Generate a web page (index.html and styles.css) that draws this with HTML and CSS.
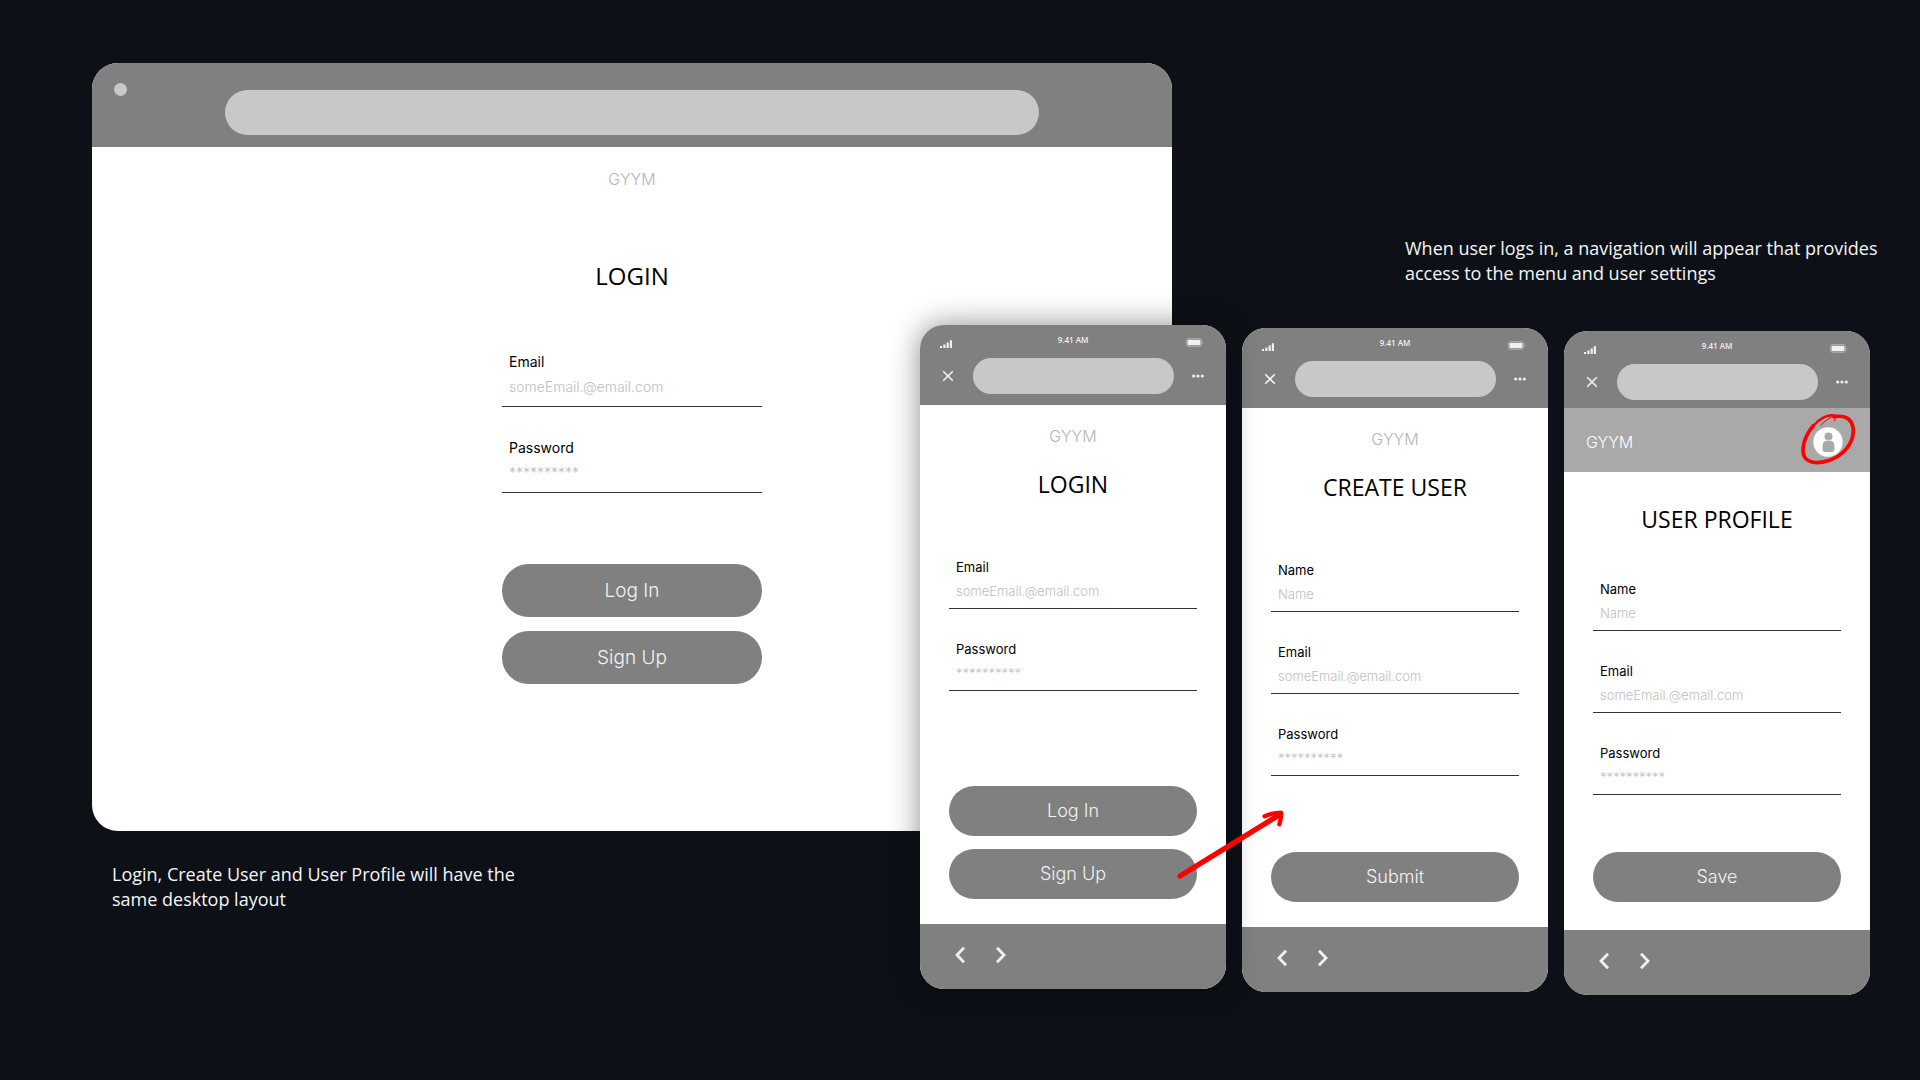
FILE: index.html
```html
<!DOCTYPE html>
<html lang="en">
<head>
<meta charset="utf-8">
<meta name="viewport" content="width=device-width, initial-scale=1">
<title>GYYM wireframes</title>
<link rel="stylesheet" href="styles.css">
</head>
<body>
<svg class="sprite" aria-hidden="true">
  <symbol id="signal" viewBox="0 0 12 8"><path d="M0 6h2v2H0zM3.3 4.5h2.200V8H3.300zM6.600 2.500h2.200V8H6.600zM9.800 .3H12V8H9.800z"/></symbol>
  <symbol id="battery" viewBox="0 0 18 9"><rect x=".5" y=".5" width="15" height="8" rx="2" fill="none" stroke="currentColor" opacity=".35"/><rect x="1.500" y="1.800" width="13" height="5.400" rx="1"/><path d="M16.500 3v3q1-.5 1-1.500t-1-1.500" opacity=".35"/></symbol>
  <symbol id="close" viewBox="0 0 12 12"><path d="M1.200 1.200l9.600 9.600M10.800 1.200l-9.600 9.600" fill="none" stroke="currentColor" stroke-width="1.600"/></symbol>
  <symbol id="more" viewBox="0 0 12 4"><circle cx="1.700" cy="2" r="1.600"/><circle cx="6" cy="2" r="1.600"/><circle cx="10.300" cy="2" r="1.600"/></symbol>
  <symbol id="back" viewBox="0 0 12 18"><path d="M10 1.800L3 9l7 7.200" fill="none" stroke="currentColor" stroke-width="2.800"/></symbol>
  <symbol id="forward" viewBox="0 0 12 18"><path d="M2 1.800L9 9l-7 7.200" fill="none" stroke="currentColor" stroke-width="2.800"/></symbol>
</svg>

<main class="stage">
  <section class="desktop-side">
    <div class="window">
      <header class="window-bar">
        <span class="window-dot"></span>
        <input class="address window-address" type="text" aria-label="Address">
      </header>
      <form class="window-body">
        <p class="brand">GYYM</p>
        <h1 class="title window-title">LOGIN</h1>
        <div class="fields">
          <div class="field"><label for="d-email">Email</label><input id="d-email" type="email" placeholder="someEmail.@email.com"></div>
          <div class="field"><label for="d-pass">Password</label><input id="d-pass" type="password" placeholder="**********"></div>
        </div>
        <div class="actions">
          <button class="btn" type="button">Log In</button>
          <button class="btn" type="button">Sign Up</button>
        </div>
      </form>
    </div>
    <p class="note desktop-note">Login, Create User and User Profile will have the same desktop layout</p>
  </section>

  <section class="phone-side">
    <p class="note phone-note">When user logs in, a navigation will appear that provides access to the menu and user settings</p>
    <div class="phones">
      <article class="phone phone-front">
        <header class="phone-bar">
          <div class="status"><svg class="signal"><use href="#signal"/></svg><span>9.41 AM</span><svg class="battery"><use href="#battery"/></svg></div>
          <div class="browse"><button class="icon-btn" type="button" aria-label="Close"><svg class="close"><use href="#close"/></svg></button><input class="address" type="text" aria-label="Address"><button class="icon-btn" type="button" aria-label="More"><svg class="more"><use href="#more"/></svg></button></div>
        </header>
        <form class="phone-body">
          <p class="brand">GYYM</p>
          <h2 class="title">LOGIN</h2>
          <div class="fields">
            <div class="field"><label for="l-email">Email</label><input id="l-email" type="email" placeholder="someEmail.@email.com"></div>
            <div class="field"><label for="l-pass">Password</label><input id="l-pass" type="password" placeholder="**********"></div>
          </div>
          <div class="actions">
            <button class="btn" type="button">Log In</button>
            <button class="btn" type="button">Sign Up</button>
          </div>
        </form>
        <footer class="phone-foot">
          <button class="icon-btn" type="button" aria-label="Back"><svg class="chevron"><use href="#back"/></svg></button>
          <button class="icon-btn" type="button" aria-label="Forward"><svg class="chevron"><use href="#forward"/></svg></button>
        </footer>
        <svg class="arrow" viewBox="795 144 330 216" aria-hidden="true"><path d="M807 348L1108 163" stroke-width="16"/><path d="M1061 169Q1085 158 1110 158Q1112 172 1105 193" stroke-width="13"/></svg>
      </article>

      <article class="phone phone-second">
        <header class="phone-bar">
          <div class="status"><svg class="signal"><use href="#signal"/></svg><span>9.41 AM</span><svg class="battery"><use href="#battery"/></svg></div>
          <div class="browse"><button class="icon-btn" type="button" aria-label="Close"><svg class="close"><use href="#close"/></svg></button><input class="address" type="text" aria-label="Address"><button class="icon-btn" type="button" aria-label="More"><svg class="more"><use href="#more"/></svg></button></div>
        </header>
        <form class="phone-body">
          <p class="brand">GYYM</p>
          <h2 class="title">CREATE USER</h2>
          <div class="fields">
            <div class="field"><label for="c-name">Name</label><input id="c-name" type="text" placeholder="Name"></div>
            <div class="field"><label for="c-email">Email</label><input id="c-email" type="email" placeholder="someEmail.@email.com"></div>
            <div class="field"><label for="c-pass">Password</label><input id="c-pass" type="password" placeholder="**********"></div>
          </div>
          <div class="actions">
            <button class="btn" type="button">Submit</button>
          </div>
        </form>
        <footer class="phone-foot">
          <button class="icon-btn" type="button" aria-label="Back"><svg class="chevron"><use href="#back"/></svg></button>
          <button class="icon-btn" type="button" aria-label="Forward"><svg class="chevron"><use href="#forward"/></svg></button>
        </footer>
      </article>

      <article class="phone phone-third">
        <header class="phone-bar">
          <div class="status"><svg class="signal"><use href="#signal"/></svg><span>9.41 AM</span><svg class="battery"><use href="#battery"/></svg></div>
          <div class="browse"><button class="icon-btn" type="button" aria-label="Close"><svg class="close"><use href="#close"/></svg></button><input class="address" type="text" aria-label="Address"><button class="icon-btn" type="button" aria-label="More"><svg class="more"><use href="#more"/></svg></button></div>
        </header>
        <nav class="app-nav">
          <a class="app-name" href="#">GYYM</a>
          <a class="account" href="#" aria-label="User settings">
            <svg class="avatar" viewBox="0 0 30 30"><circle cx="15" cy="15" r="14.700" fill="#fff"/><circle cx="15.500" cy="9.500" r="4" fill="#a9a9a9"/><path d="M9.500 20C9.500 15 12 13 15.500 13s6 2 6 7v2q0 3-3 3h-6q-3 0-3-3z" fill="#a9a9a9"/><path d="M11.500 13.300h8" stroke="#fff" stroke-width=".7"/></svg>
            <svg class="ring" viewBox="750 306 168 162" aria-hidden="true"><path d="M852 320C890 314 910 330 910 365C908 402 880 436 841 450C808 462 775 461 763 440C752 417 765 375 790 347" stroke-width="11"/><path d="M790 347C808 327 830 314 850 317" stroke-width="7"/><path d="M813 346Q832 323 856 318Q858 325 853 333M806 331Q835 309 857 315" stroke-width="3"/></svg>
          </a>
        </nav>
        <form class="phone-body">
          <h2 class="title">USER PROFILE</h2>
          <div class="fields">
            <div class="field"><label for="p-name">Name</label><input id="p-name" type="text" placeholder="Name"></div>
            <div class="field"><label for="p-email">Email</label><input id="p-email" type="email" placeholder="someEmail.@email.com"></div>
            <div class="field"><label for="p-pass">Password</label><input id="p-pass" type="password" placeholder="**********"></div>
          </div>
          <div class="actions">
            <button class="btn" type="button">Save</button>
          </div>
        </form>
        <footer class="phone-foot">
          <button class="icon-btn" type="button" aria-label="Back"><svg class="chevron"><use href="#back"/></svg></button>
          <button class="icon-btn" type="button" aria-label="Forward"><svg class="chevron"><use href="#forward"/></svg></button>
        </footer>
      </article>
    </div>
  </section>
</main>
</body>
</html>
```
FILE: styles.css
```css
* { box-sizing: border-box; }

body {
  margin: 0;
  min-height: 100vh;
  background: #0d1117;
  color: #000;
  font-family: Inter, "Liberation Sans", sans-serif;
}

p, h1, h2 { margin: 0; }
button, input { font: inherit; color: inherit; }
svg { display: block; fill: currentColor; }
.sprite { display: none; }

.stage {
  display: grid;
  grid-template-columns: 828fr 252fr 718fr;
  align-items: start;
  padding: 63px 30px 0 92px;
}

.desktop-side { grid-area: 1 / 1 / 2 / 3; }

.phone-side {
  grid-area: 1 / 2 / 2 / 4;
  display: flex;
  flex-direction: column;
  gap: 39px;
  padding-top: 173px;
}

.note {
  color: #f5f5f5;
  font: 18px/25px "Open Sans", "Noto Sans", sans-serif;
}

.desktop-note { max-width: 440px; margin: 31px 0 0 20px; }
.phone-note { align-self: flex-end; width: 485px; }

/* Shared form parts */
.address {
  min-width: 0;
  padding: 0 20px;
  border: 0;
  background: #c8c8c8;
}

.brand {
  color: #b4b4b4;
  font-size: 16px;
  font-weight: 300;
  line-height: 20px;
  text-align: center;
}

.title {
  font: 400 23px/32px "Open Sans", "Noto Sans", sans-serif;
  text-align: center;
}

.fields { display: flex; flex-direction: column; gap: 32px; }
.field { display: flex; flex-direction: column; font-size: 13px; }
.field label { padding-left: 7px; line-height: 16px; }

.field input {
  width: 100%;
  height: 34px;
  padding: 0 7px 2px;
  border: 0;
  border-bottom: 1px solid #333;
  border-radius: 0;
  background: none;
}

.field input::placeholder { color: #bebebe; font-weight: 300; opacity: 1; }

.actions { display: flex; flex-direction: column; gap: 13px; }

.btn {
  height: 50px;
  padding: 0 0 2px;
  border: 0;
  border-radius: 25px;
  background: #808080;
  color: #f2f2f2;
  font-size: 18px;
  font-weight: 300;
}

.icon-btn {
  display: flex;
  align-items: center;
  justify-content: center;
  padding: 0;
  border: 0;
  background: none;
  color: #f0f0f0;
}

/* Desktop browser */
.window {
  display: flex;
  flex-direction: column;
  min-height: 768px;
  overflow: hidden;
  border-radius: 26px;
  background: #fff;
}

.window-bar {
  display: grid;
  grid-template-columns: minmax(0, 1fr) 75.4% minmax(0, 1fr);
  align-items: start;
  height: 84px;
  background: #808080;
}

.window-dot {
  width: 13px;
  height: 13px;
  margin: 20px 0 0 22px;
  border-radius: 50%;
  background: #c8c8c8;
}

.window-address { height: 45px; margin-top: 27px; border-radius: 23px; }

.window-body {
  display: flex;
  flex-direction: column;
  width: 260px;
  margin: 22px auto 0;
}

.window-title { margin-top: 71px; font-size: 24px; }
.window-body .fields { gap: 33px; margin: 62px 0 71px; }
.window-body .field { font-size: 14px; }
.window-body .field input { height: 37px; padding-bottom: 4px; }
.window-body .btn { height: 53px; border-radius: 27px; font-size: 19px; padding: 0; }
.window-body .actions { gap: 14px; }

/* Phones */
.phones {
  display: flex;
  align-items: flex-start;
  gap: 16px;
  margin-right: 20px;
}

.phone {
  position: relative;
  display: flex;
  flex: 1;
  flex-direction: column;
  min-width: 0;
  min-height: 664px;
  border-radius: 24px;
  background: #fff;
}

.phone-front { z-index: 1; box-shadow: 0 0 30px rgba(0, 0, 0, .45); }
.phone-second { margin-top: 3px; }
.phone-third { margin-top: 6px; }

.phone-bar {
  height: 80px;
  padding: 7px 20px 0;
  border-radius: 24px 24px 0 0;
  background: #808080;
  color: #f0f0f0;
}

.status {
  display: grid;
  grid-template-columns: 1fr auto 1fr;
  align-items: center;
  height: 14px;
  font: 600 8px/14px "Open Sans", "Noto Sans", sans-serif;
}

.signal { width: 12px; height: 8px; margin-top: 8px; }
.battery { width: 18px; height: 9px; margin: 4px 2px 0 0; justify-self: end; }

.browse {
  display: flex;
  align-items: center;
  justify-content: space-between;
  margin-top: 12px;
}

.browse .address { flex: 1; height: 36px; margin: 0 16px 0 17px; border-radius: 18px; }
.browse .icon-btn { width: 16px; height: 24px; }
.close { width: 12px; height: 12px; }
.more { width: 12px; height: 4px; }

.phone-body {
  display: flex;
  flex: 1;
  flex-direction: column;
  padding: 21px 29px 25px;
}

.phone-body .title { margin-top: 22px; }
.phone-body .fields { margin-top: 59px; }
.phone-body .actions { margin-top: auto; }

.phone-foot {
  display: flex;
  align-items: flex-start;
  gap: 29px;
  height: 65px;
  padding: 22px 34px 0;
  border-radius: 0 0 24px 24px;
  background: #808080;
}

.chevron { width: 12px; height: 18px; }

.app-nav {
  display: flex;
  align-items: center;
  justify-content: space-between;
  height: 64px;
  margin-top: -3px;
  padding: 4px 27px 0 22px;
  background: #a9a9a9;
}

.app-name { color: #fff; font-size: 16px; font-weight: 300; text-decoration: none; }
.account { position: relative; }
.avatar { width: 30px; height: 30px; }

.ring, .arrow {
  position: absolute;
  fill: none;
  stroke: #f00;
  stroke-linecap: round;
  stroke-linejoin: round;
}

.ring { top: -15px; left: -13px; width: 56px; height: 54px; }
.arrow { right: -60px; bottom: 109px; width: 110px; height: 72px; }

.phone-third .phone-body { padding: 31px 29px 28px; }
.phone-third .title { margin-top: 0; }
.phone-third .fields { margin-top: 46px; }
```
